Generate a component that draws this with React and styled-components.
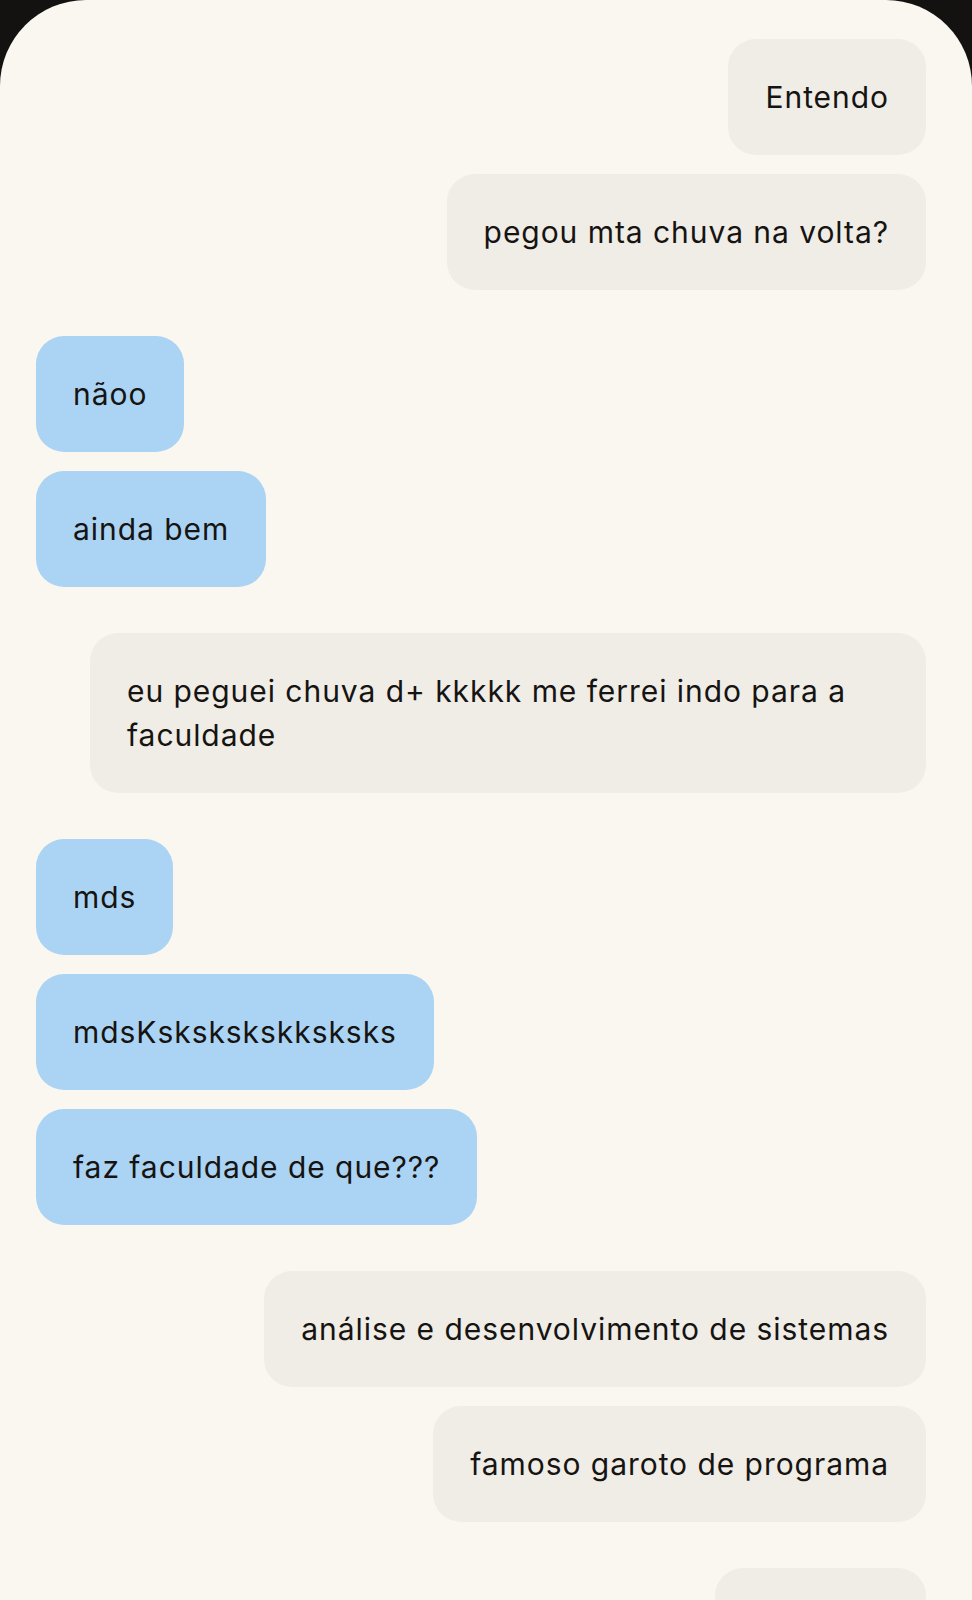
import React from 'react';
import styled, { createGlobalStyle } from 'styled-components';

const GlobalStyle = createGlobalStyle`
    html, body {
        margin: 0;
        padding: 0;
        background: #141210;
    }
    * {
        box-sizing: border-box;
    }
`;

const Screen = styled.div`
    width: 972px;
    height: 1600px;
    background: #141210;
    overflow: hidden;
`;

const Panel = styled.div`
    height: 100%;
    background: #faf7f1;
    border-radius: 86px 86px 0 0;
    padding: 39px 46px 0 36px;
    display: flex;
    flex-direction: column;
    gap: 46px;
    overflow: hidden;
`;

const Group = styled.div`
    display: flex;
    flex-direction: column;
    align-items: ${props => props.mine ? 'flex-end' : 'flex-start'};
    gap: 19px;
`;

const Bubble = styled.div`
    max-width: 836px;
    min-width: ${props => props.minWidth || 0}px;
    padding: 36px 37px;
    border-radius: 28px;
    background: ${props => props.mine ? '#f0ece6' : '#abd3f3'};
    color: #161412;
    font-family: Inter, "Liberation Sans", sans-serif;
    font-size: 30px;
    line-height: 44px;
    letter-spacing: 0.95px;
    flex-shrink: 0;
`;

// the last bubble is cut off by the bottom edge, only its top shows
const thread = [
    { mine: true, messages: ['Entendo', 'pegou mta chuva na volta?'] },
    { mine: false, messages: ['nãoo', 'ainda bem'] },
    { mine: true, messages: ['eu peguei chuva d+ kkkkk me ferrei indo para a faculdade'] },
    { mine: false, messages: ['mds', 'mdsKskskskskksksks', 'faz faculdade de que???'] },
    { mine: true, messages: ['análise e desenvolvimento de sistemas', 'famoso garoto de programa'] },
    { mine: true, messages: ['\u00a0'], minWidth: 211 },
];

const App = () => (
    <Screen>
        <GlobalStyle />
        <Panel>
            {thread.map((group, i) => (
                <Group key={i} mine={group.mine}>
                    {group.messages.map((text, j) => (
                        <Bubble key={j} mine={group.mine} minWidth={group.minWidth}>{text}</Bubble>
                    ))}
                </Group>
            ))}
        </Panel>
    </Screen>
);

export default App;
